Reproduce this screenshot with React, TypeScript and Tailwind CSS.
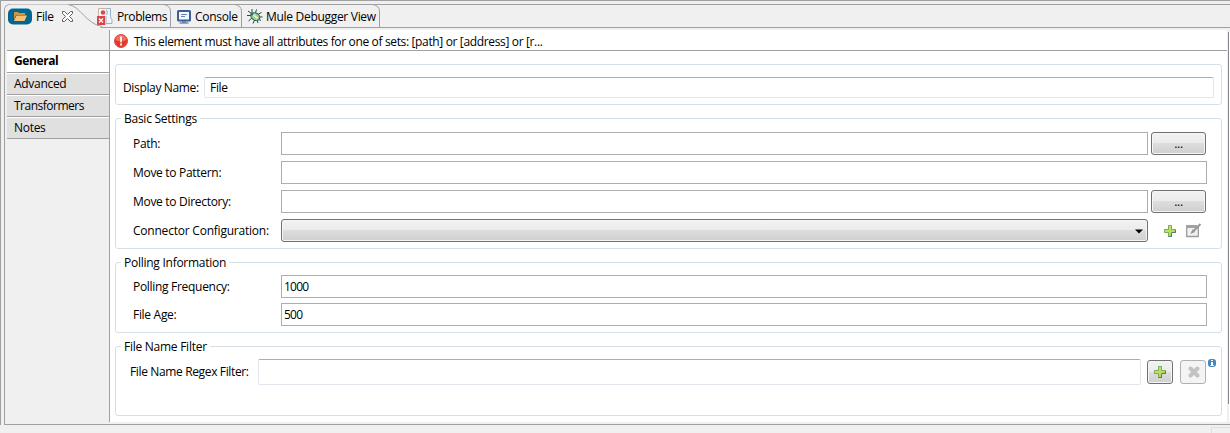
import React from "react";

const Plus = ({ className = "" }: { className?: string }) => (
  <svg width="14" height="14" viewBox="0 0 14 14" className={`block shrink-0 ${className}`}>
    <defs>
      <linearGradient id="plusFill" x1="0" y1="0" x2="1" y2="1">
        <stop offset="0" stopColor="#d8e860" />
        <stop offset="1" stopColor="#b0cf58" />
      </linearGradient>
    </defs>
    <path d="M5.500 1.500h3v4h4v3h-4v4h-3v-4h-4v-3h4z" fill="url(#plusFill)" stroke="#74ad60" />
    <path d="M8.500 9v3.500h-3M9 8.500h3.500V6" fill="none" stroke="#3b846c" />
  </svg>
);

const FolderIcon = () => (
  <svg width="24" height="17" viewBox="0 0 24 17" className="shrink-0">
    <rect width="24" height="16" y=".5" rx="5" fill="#006890" />
    <path d="M6 4h4l1 1h6v2H8l-2 5z" fill="#d5953c" />
    <path d="M8.500 7.500H19L16.500 13H6z" fill="#f5c174" />
  </svg>
);

const CloseIcon = () => (
  <svg width="11" height="11" viewBox="0 0 11 11" fill="#fff" stroke="#606060" className="shrink-0">
    <path d="M.5.5h2L5.500 3.500 8.500.5h2v2l-3 3 3 3v2h-2l-3-3-3 3h-2v-2l3-3-3-3z" />
  </svg>
);

const ProblemsIcon = () => (
  <svg width="16" height="17" viewBox="0 0 16 17" className="shrink-0">
    <path d="M1.500 8V.5h8V16H7" fill="#f6f8fc" stroke="#c4b698" />
    <path d="M9.500.5h4v7.500q0 2 1.500 3.500v4H9V8" fill="#edf4fb" stroke="#9db2ca" />
    <path d="M9.500 2q2 2 0 5" fill="none" stroke="#9db2ca" />
    <circle cx="6" cy="4.500" r="2.300" fill="#e0474c" />
    <rect y="8" width="8" height="9" fill="#d9444e" />
    <path d="m2 10.500 4 4m0-4-4 4" stroke="#fff" strokeWidth="1.300" />
  </svg>
);

const ConsoleIcon = () => (
  <svg width="14" height="14" viewBox="0 0 14 14" className="shrink-0">
    <rect x="1" y="1" width="12" height="9.500" rx=".5" fill="#f4f9ff" stroke="#3a5f98" strokeWidth="2" />
    <path d="M4 4.500h6M4 6.500h4" stroke="#6b84a8" />
    <path d="M2.500 13h9M5 12h4" stroke="#3a5f98" />
  </svg>
);

const BugIcon = () => (
  <svg width="16" height="15" viewBox="0 0 16 15" className="shrink-0">
    <path d="M5 0v4M9.500.5 8.500 4M1 2l4 3M0 6.500h4M1.500 12 5 9M6 14.500 7.500 11M11 14l-1-3M15.500 8H12M14.500 3.500l-3 1.500M14 11.500l-3-1.500" stroke="#244a48" fill="none" />
    <ellipse cx="8.300" cy="7.600" rx="4.700" ry="3.600" transform="rotate(32 8.300 7.600)" fill="#9ecb85" stroke="#2d6260" />
    <path d="m6 5.500 4.500 4" stroke="#e0f2bd" strokeWidth="2" />
    <circle cx="5" cy="5" r="1.500" fill="#3b6a66" />
  </svg>
);

const ErrorIcon = () => (
  <svg width="14" height="14" viewBox="0 0 14 14" className="mt-px shrink-0">
    <circle cx="7" cy="7" r="6.500" fill="#e5382b" stroke="#d8504a" />
    <path d="M1.500 6A5.500 5 0 0 1 12.500 6Q7 8.500 1.500 6z" fill="#f0705f" />
    <path d="M6 2.500h2L7.700 8.500H6.300zM6.100 9.600h1.800v1.800H6.100z" fill="#fff" />
  </svg>
);

const EditIcon = () => (
  <svg width="16" height="15" viewBox="0 0 16 15" className="shrink-0">
    <path d="M.7 3.500h11.600v10H.7z" fill="#f1f1f1" stroke="#9c9c9c" strokeWidth="1.300" />
    <path d="M0 2h11v3H0z" fill="#a2a2a2" />
    <path d="M14.500 1 7.500 8" stroke="#969696" strokeWidth="2" />
    <path d="m6.500 6.200 2.800 2.800-5 2z" fill="#969696" />
  </svg>
);

const InfoIcon = () => (
  <svg width="8" height="8" viewBox="0 0 8 8" className="absolute right-[5px] top-[12px]">
    <rect width="8" height="8" rx="3" fill="#4485bd" />
    <path d="M3 1h2v1H3zM3 3h2v3h1v1H2.500V6H3z" fill="#fff" />
  </svg>
);

const Group = ({ title, className, children }: { title?: string; className: string; children: React.ReactNode }) => (
  <section className={`relative ml-[5px] w-[1107px] shrink-0 rounded-[3px] border border-[#d5dfe5] ${className}`}>
    {title && <h2 className="absolute left-[5px] top-[-8px] h-4 bg-white px-[3px] leading-4 tracking-[-0.26px]">{title}</h2>}
    {children}
  </section>
);

const Row = ({ label, className = "", children }: { label: string; className?: string; children: React.ReactNode }) => (
  <div className={`flex h-[23px] items-center ${className}`}>
    <label className="w-[148px] shrink-0 leading-4">{label}</label>
    {children}
  </div>
);

const Field = ({ className, value }: { className: string; value?: string }) => (
  <div className={`h-[23px] shrink-0 border border-[#abadb3] bg-white px-[2px] leading-[22px] tracking-[-0.75px] ${className}`}>{value}</div>
);

const buttonFace =
  "rounded-[3px] border border-[#707070] bg-[linear-gradient(#f2f2f2_0%,#ebebeb_49%,#dddddd_50%,#cfcfcf_100%)] shadow-[inset_0_0_0_1px_#f6f6f6]";

const Browse = () => (
  <button className={`ml-[3px] h-[23px] w-[55px] shrink-0 text-center leading-[21px] ${buttonFace}`}>...</button>
);

const SideTab = ({ label, className = "" }: { label: string; className?: string }) => (
  <div className="flex h-[22px] flex-col">
    <div className="h-px bg-white" />
    <div className={`h-5 bg-[#e0e0e0] pl-[7px] leading-[19px] ${className}`}>{label}</div>
    <div className="h-px bg-[#a0a0a0]" />
  </div>
);

export default function App() {
  return (
    <div className="flex h-[433px] w-[1230px] flex-col overflow-hidden bg-[#f0f0f0] font-['Open_Sans','Noto_Sans',sans-serif] text-[12px] tracking-[-0.3px] text-black">
      <div className="flex h-[425px] shrink-0 border-l border-t border-[#a0a0a0] pl-[3px] pt-[3px]">
        <div className="flex w-full flex-col rounded-tl-[6px] border-b border-l border-t border-[#a0a0a0]">
          <header className="relative flex h-[23px] shrink-0 items-center border-b border-[#a0a0a0]">
            <svg width="375" height="24" viewBox="5 4 375 24" className="absolute left-0 top-[-1px]" fill="none">
              <path d="M5 28V9Q6 5 11 4.500H68C80 4.500 85 24 101 27.500V28Z" fill="#f0f0f0" />
              <path d="M68 4.500C80 5.500 86 24 102 26.500M164 4.500Q170.500 6 170.500 11V27M235 4.500Q241.500 6 241.500 11V27M373 4.500Q379.500 6 379.500 11V27" stroke="#a0a0a0" />
            </svg>
            <div className="relative flex w-[92px] items-center pl-[3px] pt-px">
              <FolderIcon />
              <span className="ml-1 w-[26px] leading-4">File</span>
              <CloseIcon />
            </div>
            <div className="relative flex w-[75px] items-center pt-px">
              <ProblemsIcon />
              <span className="ml-1 leading-4 tracking-[-0.4px]">Problems</span>
            </div>
            <div className="relative flex w-[70px] items-center pl-[5px] pt-px">
              <ConsoleIcon />
              <span className="ml-1 leading-4">Console</span>
            </div>
            <div className="relative flex items-center pt-px">
              <span className="pl-[5px]"><BugIcon /></span>
              <span className="ml-[3px] leading-4 tracking-[-0.3px]">Mule Debugger View</span>
            </div>
          </header>
          <div className="flex min-h-0 flex-1 pl-[2px]">
            <nav className="w-[102px] shrink-0 pt-[22px]">
              <div className="h-[23px] border-b border-t border-[#a0a0a0] bg-white pl-[7px] font-bold leading-5 tracking-[-0.4px]">General</div>
              <SideTab label="Advanced" />
              <SideTab label="Transformers" className="tracking-[-0.5px]" />
              <SideTab label="Notes" />
            </nav>
            <main className="mb-[2px] mt-[2px] flex w-[1118px] shrink-0 flex-col border-l border-[#a0a0a0] bg-white">
              <div className="flex h-[21px] shrink-0 items-center border-b border-[#a0a0a0] pl-1">
                <ErrorIcon />
                <span className="ml-[6px] mt-[4px] leading-4 tracking-[-0.35px]">
                  This element must have all attributes for one of sets: [path] or [address] or [r...
                </span>
              </div>
              <Group className="mt-[13px] flex h-[41px] items-center pl-[7px] pt-[5px]">
                <label className="mt-[2px] w-[81px] leading-4 tracking-[-0.35px]">Display Name:</label>
                <div className="h-[21px] w-[1010px] rounded-[2px] border border-[#e2e5ec] border-t-[#abadb3] pl-[5px] leading-[20px]">File</div>
              </Group>
              <Group title="Basic Settings" className="mt-[13px] h-[131px] pl-[17px] pt-[13px]">
                <Row label="Path:"><Field className="w-[867px]" /><Browse /></Row>
                <Row label="Move to Pattern:" className="mt-[6px]"><Field className="w-[926px]" /></Row>
                <Row label="Move to Directory:" className="mt-[6px]"><Field className="w-[867px]" /><Browse /></Row>
                <Row label="Connector Configuration:" className="mt-[6px] tracking-[-0.22px]">
                  <div className={`flex h-[23px] w-[867px] shrink-0 items-center justify-end pr-1 ${buttonFace}`}>
                    <svg width="8" height="5" viewBox="0 0 8 5" className="mt-px"><path d="M0 .5h8L4 4.500z" /></svg>
                  </div>
                  <Plus className="ml-[15px] mr-[9px]" />
                  <EditIcon />
                </Row>
              </Group>
              <Group title="Polling Information" className="mt-[13px] h-[71px] pl-[17px] pt-[12px]">
                <Row label="Polling Frequency:"><Field className="w-[926px]" value="1000" /></Row>
                <Row label="File Age:" className="mt-[5px]"><Field className="w-[926px]" value="500" /></Row>
              </Group>
              <Group title="File Name Filter" className="mt-[13px] flex h-[70px] items-start pl-[14px] pt-[12px]">
                <label className="mt-[5px] w-[128px] shrink-0 leading-4 tracking-[-0.36px]">File Name Regex Filter:</label>
                <div className="h-[26px] w-[883px] shrink-0 rounded-[2px] border border-[#e2e5ec] border-t-[#abadb3]" />
                <button className={`ml-[6px] mt-px flex h-6 w-[26px] shrink-0 items-center justify-center ${buttonFace}`}><Plus /></button>
                <button className="ml-[7px] mt-px flex h-6 w-[26px] shrink-0 items-center justify-center rounded-[3px] border border-[#adb2b5] bg-[#f4f4f4]">
                  <svg width="12" height="12" viewBox="0 0 12 12" className="ml-px"><path d="m2.500 2.500 7 7m0-7-7 7" stroke="#c3c3c3" strokeWidth="4" strokeLinecap="round" /></svg>
                </button>
                <InfoIcon />
              </Group>
            </main>
            <div className="ml-px mt-[4px] h-[372px] w-px shrink-0 bg-[#828790]" />
            <div className="mb-[2px] mt-[4px] w-px bg-white" />
          </div>
        </div>
      </div>
      <footer className="flex flex-1 justify-end pt-[2px]">
        <div className="w-[19px] border-l border-t border-[#dfdfdf]" />
      </footer>
    </div>
  );
}
